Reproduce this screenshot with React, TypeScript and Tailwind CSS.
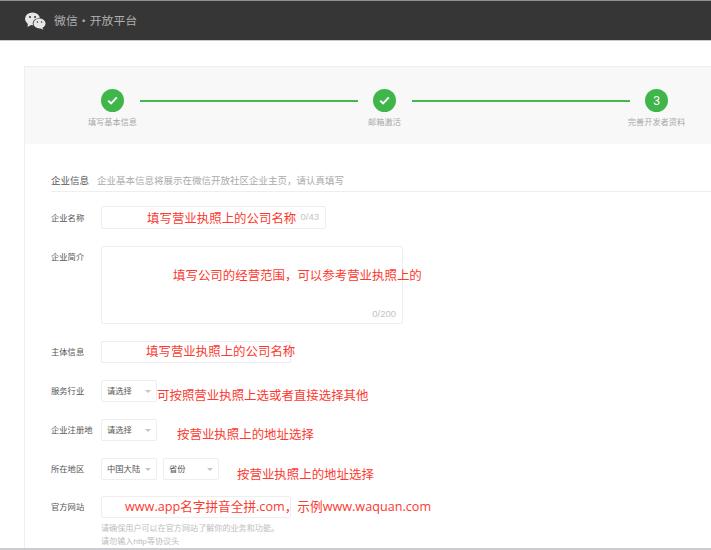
import React from "react";

const cjk = "font-['Liberation_Sans','Noto_Sans_CJK_SC',sans-serif]";

function Wechat() {
  return (
    <svg width="21" height="18" viewBox="0 0 21 18" className="shrink-0 mt-[1px]">
      <ellipse cx="7.5" cy="6.8" rx="7.5" ry="6.4" fill="#e6e6e6" />
      <path d="M3 11 L2.5 15 L7 12.5 Z" fill="#e6e6e6" />
      <circle cx="5" cy="5" r="1" fill="#363636" />
      <circle cx="10" cy="5" r="1" fill="#363636" />
      <ellipse cx="14.5" cy="11.5" rx="6.8" ry="5.6" fill="#363636" />
      <ellipse cx="14.5" cy="11.5" rx="6" ry="5" fill="#e6e6e6" />
      <path d="M17 15 L18.5 17.8 L14.5 16 Z" fill="#e6e6e6" />
      <circle cx="12.4" cy="10" r=".8" fill="#363636" />
      <circle cx="16.6" cy="10" r=".8" fill="#363636" />
    </svg>
  );
}

function Step({ label, n }: { label: string; n?: string }) {
  return (
    <div className="w-[91px] shrink-0 flex flex-col items-center">
      <div className="w-[23px] h-[23px] rounded-full bg-[#3fb54a] flex items-center justify-center text-white text-[12px] leading-none">
        {n ?? (
          <svg width="11" height="9" viewBox="0 0 11 9" fill="none">
            <path d="M1.2 4.6 L4.1 7.4 L9.8 1.4" stroke="#fff" strokeWidth="1.9" />
          </svg>
        )}
      </div>
      <div className="mt-[5px] text-[8.2px] leading-[12px] text-[#a9a9a9] whitespace-nowrap">{label}</div>
    </div>
  );
}

function Line({ w }: { w: string }) {
  return <div className={`${w} h-[2px] bg-[#46b750] mt-[10.5px] shrink-0`} />;
}

function Note({ className, children }: { className: string; children: React.ReactNode }) {
  return (
    <span className={`absolute whitespace-nowrap leading-[16px] text-[#fb3a30] ${className}`}>
      {children}
    </span>
  );
}

function Label({ children, className = "" }: { children: React.ReactNode; className?: string }) {
  return <div className={`w-[50px] shrink-0 text-[8.3px] leading-[12px] text-[#555] whitespace-nowrap ${className}`}>{children}</div>;
}

function Select({ text }: { text: string }) {
  return (
    <div className="relative w-[56px] h-[22px] border border-[#eeeeee] rounded-[2px] bg-white flex items-center pl-[5px] text-[8.3px] text-[#555]">
      {text}
      <span className="absolute right-[5px] top-[9px] w-0 h-0 border-x-[3px] border-x-transparent border-t-[3px] border-t-[#c4c4c4]" />
    </div>
  );
}

export default function App() {
  return (
    <div className={`relative w-[711px] h-[550px] overflow-hidden bg-white ${cjk}`}>
      <header className="h-[41px] bg-[#363636] border-t border-t-[#8f8f9a] border-b border-b-[#c9c9c9] flex items-center pl-[25px]">
        <Wechat />
        <span className="ml-[8px] pt-[2px] text-[11.9px] text-[#b0b0b0] whitespace-nowrap">微信・开放平台</span>
      </header>

      <main className="mt-[25px] ml-[24px] w-[720px] border-l border-t border-[#eeeeee]">
        <div className="h-[77px] bg-[#f8f8f8] pt-[22px] pl-[42px] flex items-start">
          <Step label="填写基本信息" />
          <Line w="w-[218px] -ml-[18px]" />
          <div className="-ml-[19px] -mr-[18px]"><Step label="邮箱激活" /></div>
          <Line w="w-[218px]" />
          <div className="-ml-[19px]"><Step label="完善开发者资料" n="3" /></div>
        </div>

        <section className="pl-[26px]">
          <div className="mt-[31px] h-[17px] border-b border-[#eeeeee] flex items-start whitespace-nowrap">
            <span className="text-[9.5px] leading-[12px] text-[#555]">企业信息</span>
            <span className="ml-[8px] text-[9.5px] leading-[12px] text-[#aaaaaa]">企业基本信息将展示在微信开放社区企业主页，请认真填写</span>
          </div>

          <div className="mt-[14px] flex items-center">
            <Label>企业名称</Label>
            <div className="w-[225px] h-[23px] border border-[#eeeeee] rounded-[2px] flex items-center justify-end pr-[6px] text-[9.5px] text-[#c4c4c4]">0/43</div>
          </div>

          <div className="mt-[17px] flex items-start">
            <Label className="mt-[5px]">企业简介</Label>
            <div className="w-[302px] h-[78px] border border-[#eeeeee] rounded-[2px] flex items-end justify-end pr-[6px] pb-[3px] text-[9.5px] leading-[12px] text-[#c4c4c4]">0/200</div>
          </div>

          <div className="mt-[17px] flex items-center">
            <Label>主体信息</Label>
            <div className="w-[190px] h-[22px] border border-[#eeeeee] rounded-[2px]" />
          </div>

          <div className="mt-[17px] flex items-center">
            <Label>服务行业</Label>
            <Select text="请选择" />
          </div>

          <div className="mt-[17px] flex items-center">
            <Label>企业注册地</Label>
            <Select text="请选择" />
          </div>

          <div className="mt-[17px] flex items-center">
            <Label>所在地区</Label>
            <div className="flex gap-[6px]">
              <Select text="中国大陆" />
              <Select text="省份" />
            </div>
          </div>

          <div className="mt-[16px] flex items-center">
            <Label>官方网站</Label>
            <div className="w-[190px] h-[22px] border border-[#eeeeee] rounded-[2px]" />
          </div>

          <div className="mt-[4px] ml-[50px] text-[8.1px] leading-[13px] text-[#bdbdbd] whitespace-nowrap">
            <div>请确保用户可以在官方网站了解你的业务和功能。</div>
            <div>请勿输入http等协议头</div>
          </div>
        </section>
      </main>

      <Note className="left-[147px] top-[211px] text-[12.45px]">填写营业执照上的公司名称</Note>
      <Note className="left-[173px] top-[268px] text-[12.45px]">填写公司的经营范围，可以参考营业执照上的</Note>
      <Note className="left-[146px] top-[344px] text-[12.45px]">填写营业执照上的公司名称</Note>
      <Note className="left-[157px] top-[388px] text-[12.45px]">可按照营业执照上选或者直接选择其他</Note>
      <Note className="left-[177px] top-[427px] text-[12.45px]">按营业执照上的地址选择</Note>
      <Note className="left-[237px] top-[467px] text-[12.45px]">按营业执照上的地址选择</Note>
      <Note className="left-[125px] top-[498px] text-[12.65px] font-['Open_Sans','Noto_Sans_CJK_SC',sans-serif]">www.app名字拼音全拼.com，示例www.waquan.com</Note>

      <div className="absolute left-0 right-0 bottom-0 h-[2px] bg-[#c9ccd1]" />
    </div>
  );
}
